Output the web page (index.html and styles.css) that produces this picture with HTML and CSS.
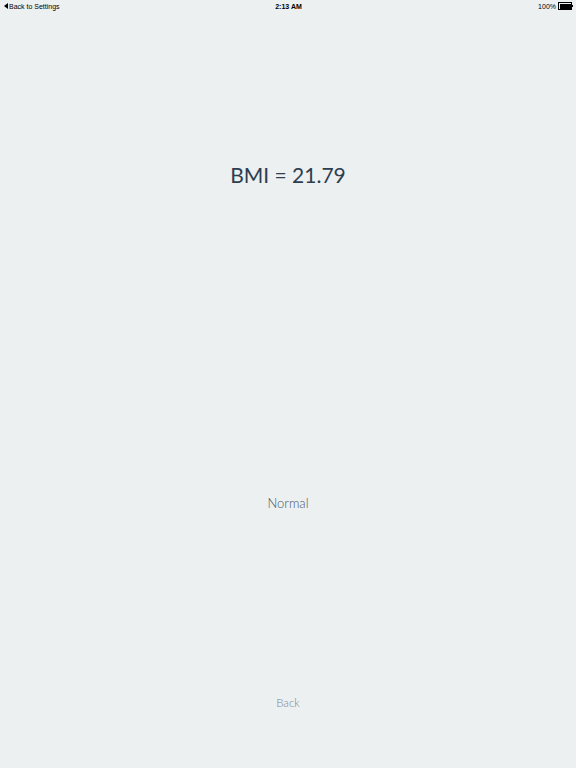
FILE: index.html
```html
<!DOCTYPE html>
<html>
<head>
<meta charset="utf-8">
<link rel="stylesheet" href="styles.css">
</head>
<body>
<div class="screen">
  <div class="status">
    <div class="status-left"><span class="tri"></span>Back to Settings</div>
    <div class="status-center">2:13 AM</div>
    <div class="status-right">100% <span class="battery"><span class="fill"></span></span><span class="nub"></span></div>
  </div>
  <div class="content">
    <div class="bmi">BMI = 21.79</div>
    <div class="category">Normal</div>
    <div class="back">Back</div>
  </div>
</div>
</body>
</html>
```
FILE: styles.css
```css
html, body {
  margin: 0;
  padding: 0;
  background: #ecf0f1;
}
.screen {
  width: 576px;
  height: 768px;
  display: flex;
  flex-direction: column;
  font-family: Lato, "Open Sans", sans-serif;
}
.status {
  height: 12px;
  display: grid;
  grid-template-columns: 1fr auto 1fr;
  align-items: center;
  font-family: "Liberation Sans", Arial, sans-serif;
  font-size: 7px;
  color: #000;
  padding: 0 3px 0 4px;
}
.status-left {
  display: flex;
  align-items: center;
}
.tri {
  width: 0;
  height: 0;
  border-top: 3.5px solid transparent;
  border-bottom: 3.5px solid transparent;
  border-right: 4px solid #000;
  margin-right: 1px;
}
.status-center {
  font-weight: bold;
}
.status-right {
  display: flex;
  align-items: center;
  justify-content: flex-end;
}
.battery {
  width: 11px;
  height: 5px;
  border: 0.5px solid #000;
  margin-left: 2px;
  display: flex;
  padding: 0.5px;
}
.fill {
  flex: 1;
  background: #000;
}
.nub {
  width: 1px;
  height: 2px;
  background: #000;
}
.content {
  flex: 1;
  display: flex;
  flex-direction: column;
  align-items: center;
}
.bmi {
  margin-top: 149px;
  font-size: 21px;
  line-height: 28px;
  color: #2c3e50;
}
.category {
  margin-top: 305px;
  font-size: 13px;
  line-height: 18px;
  font-weight: 300;
  color: #4a5562;
}
.back {
  margin-top: 183px;
  font-size: 11.5px;
  line-height: 16px;
  font-weight: 300;
  color: #7a8793;
}
```
